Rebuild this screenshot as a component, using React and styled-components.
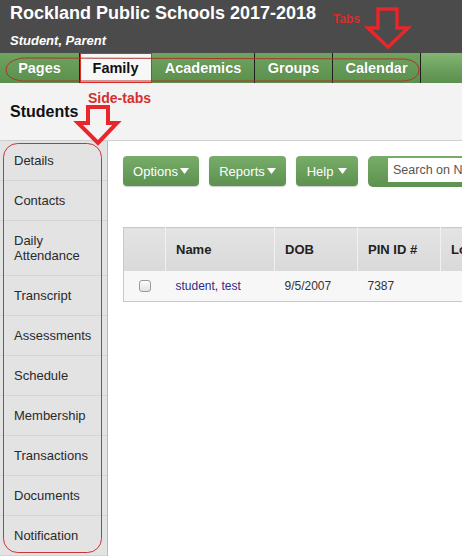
import React from "react";
import styled, { createGlobalStyle } from "styled-components";

const GlobalStyle = createGlobalStyle`
  html, body {
    margin: 0;
    padding: 0;
    width: 462px;
    height: 556px;
    overflow: hidden;
    background: #ffffff;
    font-family: "Liberation Sans", Arial, sans-serif;
  }
`;

const tabs = [
  { label: "Pages", w: 80 },
  { label: "Family", w: 72, active: true },
  { label: "Academics", w: 103 },
  { label: "Groups", w: 78 },
  { label: "Calendar", w: 88 },
];

const sideTabs = [
  "Details",
  "Contacts",
  "Daily Attendance",
  "Transcript",
  "Assessments",
  "Schedule",
  "Membership",
  "Transactions",
  "Documents",
  "Notification",
];

function Caret() {
  return (
    <svg width="9" height="6" viewBox="0 0 9 6">
      <path d="M0 0 L9 0 L4.5 6 Z" fill="#fff" />
    </svg>
  );
}

function App() {
  return (
    <Page>
      <GlobalStyle />
      <Header>
        <Title>Rockland Public Schools 2017-2018</Title>
        <Subtitle>Student, Parent</Subtitle>
      </Header>
      <TabBar>
        {tabs.map((t) => (
          <Tab key={t.label} $w={t.w} $active={t.active}>
            {t.label}
          </Tab>
        ))}
      </TabBar>
      <TitleBar>
        <Heading>Students</Heading>
      </TitleBar>
      <Body>
        <Sidebar>
          {sideTabs.map((s) => (
            <SideItem key={s} $tall={s === "Daily Attendance"}>
              {s === "Daily Attendance" ? (
                <span>
                  Daily
                  <br />
                  Attendance
                </span>
              ) : (
                s
              )}
            </SideItem>
          ))}
        </Sidebar>
        <Main>
          <Toolbar>
            <MenuButton $w={76}>
              Options<Caret />
            </MenuButton>
            <MenuButton $w={77}>
              Reports<Caret />
            </MenuButton>
            <MenuButton $w={62} $gap={5}>
              Help<Caret />
            </MenuButton>
            <SearchWrap>
              <SearchInput placeholder="Search on Name" />
            </SearchWrap>
          </Toolbar>
          <Table>
            <colgroup>
              <col style={{ width: 42 }} />
              <col style={{ width: 109 }} />
              <col style={{ width: 83 }} />
              <col style={{ width: 83 }} />
              <col style={{ width: 120 }} />
            </colgroup>
            <thead>
              <tr>
                <Th />
                <Th>Name</Th>
                <Th>DOB</Th>
                <Th>PIN ID #</Th>
                <Th>Location</Th>
              </tr>
            </thead>
            <tbody>
              <tr>
                <Td>
                  <Check />
                </Td>
                <Td>
                  <StudentLink>student, test</StudentLink>
                </Td>
                <Td>9/5/2007</Td>
                <Td>7387</Td>
                <Td />
              </tr>
            </tbody>
          </Table>
        </Main>
      </Body>

      <TabsNote>Tabs</TabsNote>
      <SideNote>Side-tabs</SideNote>
      <Marks width="462" height="556" viewBox="0 0 462 556">
        <path
          d="M378 9 L397 9 L397 28 L408 28 L388 47 L368 28 L378 28 Z"
          fill="none"
          stroke="#e8262b"
          strokeWidth="3.5"
          strokeLinejoin="miter"
        />
        <path
          d="M88 107 L108 107 L108 123 L117 123 L98 143 L78 123 L88 123 Z"
          fill="none"
          stroke="#e8262b"
          strokeWidth="4"
          strokeLinejoin="miter"
        />
        <path
          d="M22 58 L405 59 Q419 61 419 70 Q419 79 405 81 L22 81 Q6 79 6 70 Q6 61 22 58 Z"
          fill="none"
          stroke="#a8382c"
          strokeWidth="1"
        />
        <rect x="3.5" y="143.5" width="98" height="409" rx="14" fill="none" stroke="#c9343c" strokeWidth="1" />
      </Marks>
    </Page>
  );
}

export default App;

const Page = styled.div`
  position: relative;
  width: 462px;
  height: 556px;
  overflow: hidden;
  display: flex;
  flex-direction: column;
`;

const Header = styled.div`
  height: 53px;
  flex-shrink: 0;
  background: #4b4b4b;
  padding: 2px 10px 0;
  box-sizing: border-box;
  color: #fff;
`;

const Title = styled.div`
  font-size: 18px;
  font-weight: bold;
  line-height: 22px;
`;

const Subtitle = styled.div`
  font-size: 13px;
  font-weight: bold;
  font-style: italic;
  line-height: 16px;
  margin-top: 9px;
`;

const TabBar = styled.div`
  height: 30px;
  flex-shrink: 0;
  display: flex;
  background: linear-gradient(#83b673, #6b9f5c 55%, #5d8f4f);
`;

const Tab = styled.div`
  width: ${(p) => p.$w}px;
  flex-shrink: 0;
  box-sizing: border-box;
  display: flex;
  align-items: center;
  justify-content: center;
  font-size: 14.5px;
  font-weight: bold;
  color: ${(p) => (p.$active ? "#111" : "#fff")};
  background: ${(p) =>
    p.$active ? "#f7f7f7" : "linear-gradient(#6fa460, #5b8f4c)"};
  border-right: 1px solid #1e1e1e;
  outline: ${(p) => (p.$active ? "1px solid #e02a2a" : "none")};
  outline-offset: -1px;
  text-shadow: ${(p) => (p.$active ? "none" : "0 0 1px rgba(0,0,0,0.25)")};
`;

const TitleBar = styled.div`
  height: 58px;
  flex-shrink: 0;
  box-sizing: border-box;
  background: #f3f3f3;
  border-bottom: 1px solid #cfcfcf;
  display: flex;
  align-items: center;
  padding-left: 10px;
`;

const Heading = styled.div`
  font-size: 16px;
  font-weight: bold;
  color: #111;
`;

const Body = styled.div`
  flex: 1;
  display: flex;
  min-height: 0;
`;

const Sidebar = styled.div`
  width: 107px;
  flex-shrink: 0;
  background: #e3e3e3;
  border-right: 1px solid #b9b9b9;
`;

const SideItem = styled.div`
  height: ${(p) => (p.$tall ? 55 : 40)}px;
  box-sizing: border-box;
  display: flex;
  align-items: center;
  padding-left: 14px;
  font-size: 13px;
  line-height: 15px;
  color: #2a2a2a;
  border-bottom: 1px solid #d4d4d4;
`;

const Main = styled.div`
  flex: 1;
  min-width: 0;
  overflow: hidden;
  padding: 15px 0 0 15px;
`;

const Toolbar = styled.div`
  display: flex;
  align-items: flex-start;
  gap: 10px;
  height: 31px;
`;

const MenuButton = styled.div`
  width: ${(p) => p.$w}px;
  height: 30px;
  flex-shrink: 0;
  display: flex;
  align-items: center;
  justify-content: center;
  gap: ${(p) => p.$gap || 2}px;
  border-radius: 4px;
  background: linear-gradient(#78ac69, #5d914f);
  box-shadow: 0 1px 1px rgba(0, 0, 0, 0.2);
  color: #fff;
  font-size: 13px;
`;

const SearchWrap = styled.div`
  width: 200px;
  height: 31px;
  flex-shrink: 0;
  box-sizing: border-box;
  padding: 2px 0 0 20px;
  border-radius: 5px 0 0 5px;
  background: linear-gradient(#78ac69, #5d914f);
  display: flex;
  align-items: flex-start;
`;

const SearchInput = styled.input`
  width: 180px;
  height: 24px;
  box-sizing: border-box;
  border: none;
  outline: none;
  padding: 0 5px;
  font-family: "Liberation Sans", Arial, sans-serif;
  font-size: 12.5px;
  &::placeholder {
    color: #555;
  }
`;

const Table = styled.table`
  margin-top: 40px;
  width: 437px;
  table-layout: fixed;
  border-collapse: collapse;
  border: 1px solid #c9c9c9;
`;

const Th = styled.th`
  height: 43px;
  padding: 0 0 0 10px;
  text-align: left;
  font-size: 13px;
  font-weight: bold;
  color: #222;
  background: linear-gradient(#e4e4e4, #d9d9d9);
  border-left: 1px solid #f1f1f1;
  white-space: nowrap;
  overflow: hidden;
  &:first-child {
    border-left: none;
  }
`;

const Td = styled.td`
  height: 30px;
  padding: 0 0 0 10px;
  font-size: 12px;
  color: #333;
  background: #f7f7f7;
  &:first-child {
    padding-left: 15px;
  }
`;

const StudentLink = styled.span`
  color: #2d2d8a;
`;

const Check = styled.div`
  width: 12px;
  height: 12px;
  box-sizing: border-box;
  border: 1px solid #9a9a9a;
  border-radius: 3px;
  background: linear-gradient(#fdfdfd, #e2e2e2);
`;

const TabsNote = styled.div`
  position: absolute;
  left: 333px;
  top: 12px;
  font-size: 12px;
  font-weight: bold;
  color: #dc2b2b;
`;

const SideNote = styled.div`
  position: absolute;
  left: 88px;
  top: 90px;
  font-size: 14px;
  font-weight: bold;
  color: #d33030;
`;

const Marks = styled.svg`
  position: absolute;
  left: 0;
  top: 0;
  pointer-events: none;
`;
